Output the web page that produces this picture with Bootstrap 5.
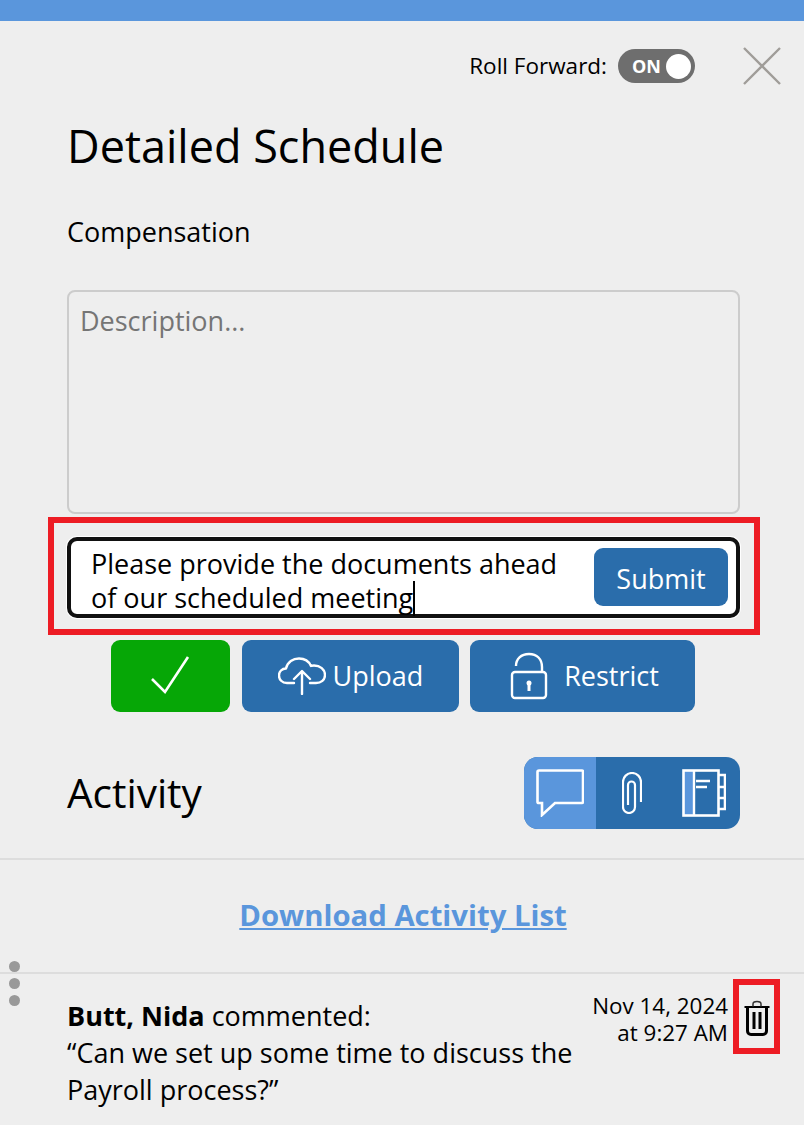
<!DOCTYPE html>
<html lang="en">
<head>
    <meta charset="UTF-8">
    <meta name="viewport" content="width=device-width, initial-scale=1.0">
    <title>Detailed Schedule</title>
    <link href="https://cdn.jsdelivr.net/npm/bootstrap@5.3.0/dist/css/bootstrap.min.css" rel="stylesheet">
    <style>
        body { background: #eee; color: #000; font-family: "Open Sans", "Noto Sans", sans-serif; overflow: hidden; }
        .top-bar { height: 21px; background: #5a96dc; }
        .head-row { padding: 26px 23px 0 0; height: 64px; }
        .roll-label { font-size: 22.5px; line-height: 38px; margin-right: 11px; }
        .roll-toggle { width: 77px; height: 34px; border-radius: 17px; background: #6e6e6e; color: #fff; font-size: 18px; font-weight: 700; padding: 0 4px 0 14px; margin: 2px 48px 0 0; }
        .roll-knob { width: 25px; height: 25px; border-radius: 50%; background: #fff; }
        .main-col { padding: 0 64px 0 67px; }
        .page-title { font-size: 45px; line-height: 58px; font-weight: 400; margin: 32px 0 0; }
        .sub-title { font-size: 27px; line-height: 36px; margin-top: 39px; }
        .desc-box.form-control { height: 224px; margin-top: 40px; background: #eee; border: 2px solid #ccc; border-radius: 8px; font-size: 27px; line-height: 36px; padding: 11px 11px; resize: none; box-shadow: none; }
        .desc-box::placeholder { color: #757575; }
        .red-mark { border: 6px solid #ed1c24; }
        .note-mark { margin: 3px -20px 0 -19px; padding: 14px 14px 11px 13px; }
        .note-box { height: 81px; background: #fff; border: 4px solid #111; border-radius: 10px; box-shadow: 0 0 0 1px #fff; padding: 7px 8px 7px 20px; }
        .note-text { font-size: 27px; line-height: 34px; width: 481px; margin-top: 8px; }
        .note-caret { display: inline-block; width: 2px; height: 35px; background: #000; vertical-align: -8px; margin-right: -2px; }
        .blue-btn.btn { background: #2a6dab; border: 0; border-radius: 9px; color: #fff; font-size: 27px; }
        .submit-btn.btn { width: 134px; height: 58px; padding: 0 0 0 0; margin-bottom: 1px; line-height: 62px; }
        .action-row { gap: 11px; margin-top: 5px; padding-left: 44px; }
        .action-row .btn { height: 72px; padding: 0; }
        .ok-btn.btn { width: 119px; background: #06a706; border: 0; border-radius: 9px; margin-right: 1px; }
        .upload-btn.btn { width: 217px; gap: 7px; }
        .action-row .restrict-btn.btn { width: 225px; gap: 16px; padding-left: 4px; }
        .activity-row { margin-top: 45px; height: 72px; }
        .activity-title { font-size: 40.5px; line-height: 72px; font-weight: 400; margin: 0; }
        .seg-group { width: 216px; height: 72px; border-radius: 14px; overflow: hidden; background: #2a6dab; }
        .seg-item { width: 72px; }
        .seg-item.on { background: #5a96dc; }
        .rule { border-top: 2px solid #ddd; }
        .activity-rule { margin-top: 29px; }
        .down-row { height: 112px; padding: 0 0 1px 2px; }
        .down-link { color: #5a96dc; font-size: 29.3px; font-weight: 700; text-decoration: underline; }
        .feed-row { position: relative; padding: 5px 24px 0 67px; }
        .drag-dots { position: absolute; left: 9px; top: -13px; gap: 6px; }
        .drag-dots span { width: 11px; height: 11px; border-radius: 50%; background: #999; }
        .feed-text { font-size: 27px; line-height: 37px; width: 520px; margin-top: 18px; }
        .feed-date { font-size: 22.4px; line-height: 27px; text-align: right; margin: 13px 5px 0 auto; white-space: nowrap; }
        .trash-mark { width: 47px; height: 75px; padding-top: 2px; }
    </style>
</head>
<body>
    <div class="top-bar"></div>

    <div class="head-row d-flex justify-content-end align-items-start">
        <span class="roll-label">Roll Forward:</span>
        <div class="roll-toggle d-flex align-items-center justify-content-between">
            <span>ON</span>
            <span class="roll-knob"></span>
        </div>
        <svg width="38" height="38" viewBox="0 0 38 38" fill="none" stroke="#a09d99" stroke-width="2.4"><path d="M1 1L37 37M37 1L1 37"/></svg>
    </div>

    <div class="main-col">
        <h1 class="page-title">Detailed Schedule</h1>
        <div class="sub-title">Compensation</div>
        <textarea class="form-control desc-box" placeholder="Description..."></textarea>

        <div class="red-mark note-mark">
            <div class="note-box d-flex justify-content-between align-items-center">
                <div class="note-text">Please provide the documents ahead of our scheduled meeting<span class="note-caret"></span></div>
                <button type="button" class="btn blue-btn submit-btn">Submit</button>
            </div>
        </div>

        <div class="action-row d-flex">
            <button type="button" class="btn ok-btn d-flex align-items-center justify-content-center">
                <svg width="40" height="40" viewBox="0 0 40 40" fill="none" stroke="#fff" stroke-width="2.6"><path d="M1 23L14 36L37 1"/></svg>
            </button>
            <button type="button" class="btn blue-btn upload-btn d-flex align-items-center justify-content-center">
                <svg width="48" height="38" viewBox="0 0 48 38" fill="none" stroke="#fff" stroke-width="2.4" stroke-linecap="round" stroke-linejoin="round"><path d="M16 26H9C4 26 1 22.500 1 18.500C1 14.500 4 11.500 8 11.500C9.500 5 15 1.500 21 1.500C27 1.500 31 4.500 33 9C34 8.500 35 8.500 36 8.500C42 8.500 47 12.500 47 18C47 23 43 26 38 26H32"/><path d="M24 37V15M16 22L24 14L32 22"/></svg>
                <span>Upload</span>
            </button>
            <button type="button" class="btn blue-btn restrict-btn d-flex align-items-center justify-content-center">
                <svg width="38" height="48" viewBox="0 0 38 48" fill="none" stroke="#fff" stroke-width="2.400"><path d="M6 14C6 7 11 2 19 2C27 2 32 7 32 15V20"/><rect x="2" y="20" width="34" height="26" rx="3"/><circle cx="19" cy="31" r="2.500" fill="#fff" stroke="none"/><path d="M19 32V39" stroke-width="3"/></svg>
                <span>Restrict</span>
            </button>
        </div>

        <div class="activity-row d-flex justify-content-between">
            <h2 class="activity-title">Activity</h2>
            <div class="seg-group d-flex">
                <div class="seg-item on d-flex align-items-center justify-content-center">
                    <svg width="48" height="48" viewBox="0 0 48 48" fill="none" stroke="#fff" stroke-width="2.600"><path d="M3 1.500H46C46.500 1.500 47 2 47 2.500V33C47 33.500 46.500 34 46 34H19L6 46V34H3C2 34 1.500 33.500 1.500 33V3C1.500 2 2 1.500 3 1.500Z"/></svg>
                </div>
                <div class="seg-item d-flex align-items-center justify-content-center">
                    <svg width="20" height="42" viewBox="0 0 20 42" fill="none" stroke="#fff" stroke-width="2.200"><path d="M19 30V10A9 9 0 0 0 1 10V35A6 6 0 0 0 13 35V13A3.500 3.500 0 0 0 6 13V33"/></svg>
                </div>
                <div class="seg-item d-flex align-items-center justify-content-center">
                    <svg width="44" height="48" viewBox="0 0 44 48" fill="none" stroke="#fff" stroke-width="2.600"><rect x="1.500" y="1.500" width="10.500" height="45" fill="#5a96dc" stroke="none"/><rect x="1.500" y="1.500" width="35" height="45"/><path d="M12 1.500V46.500" stroke-width="2.400"/><path d="M14 12H28M14 18H25"/><path d="M37 6H43V18H37M37 18H43V29H37M37 29H43V40H37"/></svg>
                </div>
            </div>
        </div>
    </div>

    <div class="rule activity-rule"></div>
    <div class="down-row d-flex align-items-center justify-content-center">
        <a href="#" class="down-link">Download Activity List</a>
    </div>
    <div class="rule"></div>

    <div class="feed-row d-flex align-items-start">
        <div class="drag-dots d-flex flex-column"><span></span><span></span><span></span></div>
        <div class="feed-text"><strong>Butt, Nida</strong> commented:<br>“Can we set up some time to discuss the Payroll process?”</div>
        <div class="feed-date">Nov 14, 2024<br>at 9:27 AM</div>
        <div class="red-mark trash-mark d-flex align-items-center justify-content-center">
            <svg width="26" height="36" viewBox="0 0 26 36" fill="none" stroke="#000" stroke-width="3"><path d="M0.500 7H25.500" stroke-width="2"/><path d="M9 6.500V4C9 2 10.500 1.500 13 1.500C15.500 1.500 17 2 17 4V6.500" stroke="#333" stroke-width="1.500"/><path d="M3.500 8V31C3.500 33 5 34.500 7 34.500H19C21 34.500 22.500 33 22.500 31V8"/><path d="M10 12V29M16 12V29" stroke-width="3"/></svg>
        </div>
    </div>

    <script src="https://cdn.jsdelivr.net/npm/bootstrap@5.3.0/dist/js/bootstrap.bundle.min.js"></script>
</body>
</html>
